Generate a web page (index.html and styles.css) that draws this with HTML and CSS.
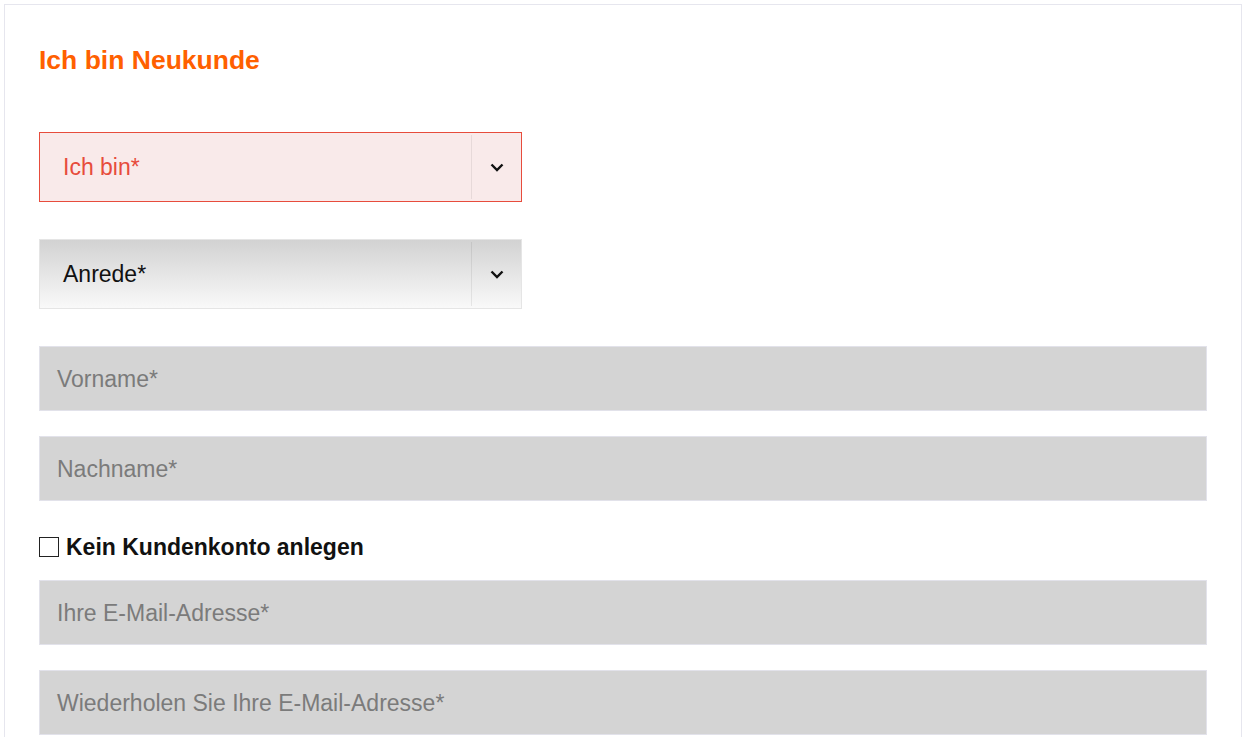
FILE: index.html
```html
<!DOCTYPE html>
<html lang="de">
<head>
<meta charset="utf-8">
<title>Ich bin Neukunde</title>
<link rel="stylesheet" href="styles.css">
</head>
<body>
<div class="panel">
  <h2 class="title">Ich bin Neukunde</h2>
  <div class="select select-error">
    <span class="select-label">Ich bin*</span>
    <span class="select-arrow"><svg width="14" height="9" viewBox="0 0 14 9"><path d="M1.5 1.5 L7 7 L12.5 1.5" fill="none" stroke="#111" stroke-width="2.4"/></svg></span>
  </div>
  <div class="select select-default">
    <span class="select-label">Anrede*</span>
    <span class="select-arrow"><svg width="14" height="9" viewBox="0 0 14 9"><path d="M1.5 1.5 L7 7 L12.5 1.5" fill="none" stroke="#111" stroke-width="2.4"/></svg></span>
  </div>
  <div class="field">Vorname*</div>
  <div class="field">Nachname*</div>
  <label class="check"><span class="box"></span><span class="check-label">Kein Kundenkonto anlegen</span></label>
  <div class="field">Ihre E-Mail-Adresse*</div>
  <div class="field">Wiederholen Sie Ihre E-Mail-Adresse*</div>
</div>
</body>
</html>
```
FILE: styles.css
```css
html, body {
  margin: 0;
  padding: 0;
  background: #fff;
  font-family: "Liberation Sans", Arial, sans-serif;
}
.panel {
  margin: 4px 1px 0 4px;
  border: 1px solid #e6e6ee;
  border-bottom: none;
  padding: 40px 34px 0 34px;
  height: 800px;
  box-sizing: border-box;
}
.title {
  margin: 0;
  font-size: 26.5px;
  line-height: 30px;
  font-weight: bold;
  color: #ff6000;
}
.select {
  margin-top: 57px;
  width: 483px;
  height: 70px;
  box-sizing: border-box;
  display: flex;
  align-items: stretch;
  border: 1px solid #e5e5e5;
}
.select + .select { margin-top: 37px; }
.select-error {
  background: #f9eaea;
  border-color: #e74c3c;
  color: #e74c3c;
}
.select-default {
  background: linear-gradient(#d2d2d2, #f9f9f9);
  color: #111;
}
.select-label {
  flex: 1;
  display: flex;
  align-items: center;
  padding-left: 23px;
  font-size: 23px;
}
.select-arrow {
  width: 49px;
  border-left: 1px solid rgba(0,0,0,0.07);
  margin: 2px 0;
  display: flex;
  align-items: center;
  justify-content: center;
}
.field {
  margin-top: 25px;
  height: 65px;
  box-sizing: border-box;
  border: 1px solid #e2e2ea;
  background: #d4d4d4;
  color: #7b7b7b;
  font-size: 23px;
  display: flex;
  align-items: center;
  padding-left: 17px;
  padding-top: 2px;
}
.select + .field { margin-top: 37px; }
.check {
  display: flex;
  align-items: center;
  margin-top: 35px;
  height: 22px;
  gap: 7px;
}
.box {
  width: 18px;
  height: 18px;
  border: 1px solid #222;
  background: #fff;
}
.check-label {
  font-size: 23px;
  font-weight: bold;
  color: #111;
}
.check + .field { margin-top: 22px; }
```
